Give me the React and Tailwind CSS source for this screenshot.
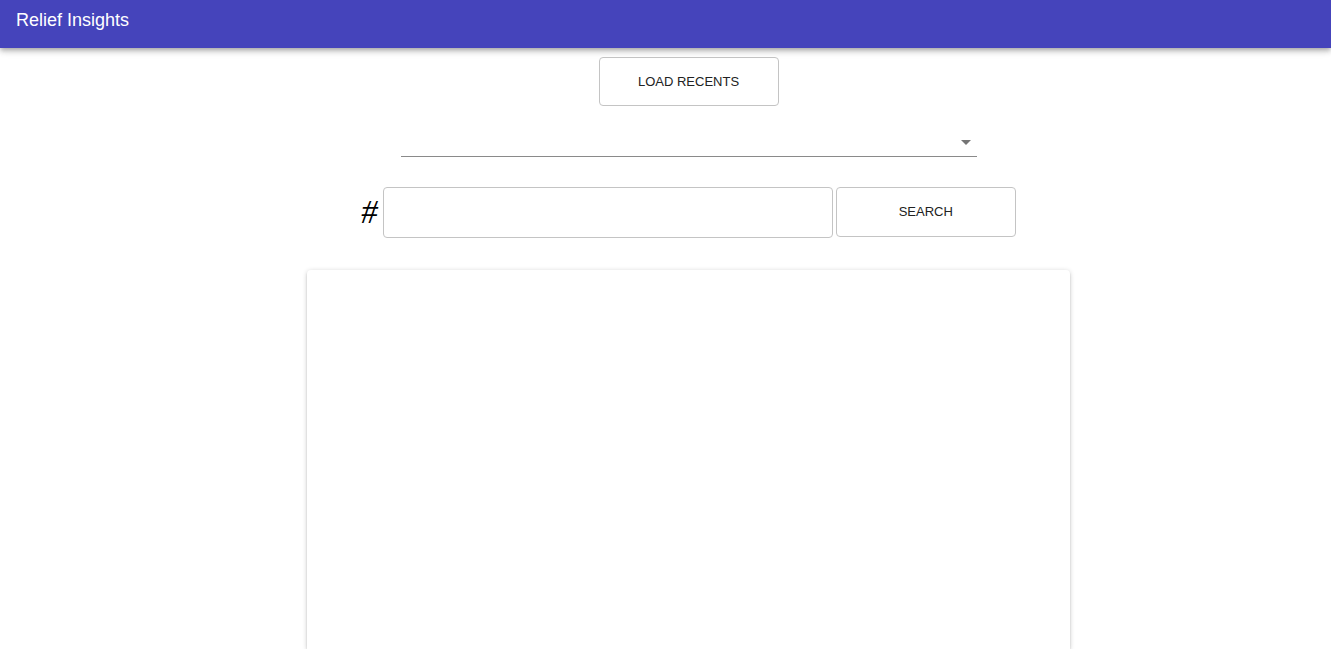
import React, { useState } from 'react';

const SANS = "font-['Liberation_Sans',Arial,sans-serif]";

const App = () => {
  const [tag, setTag] = useState('');
  const [category, setCategory] = useState('');

  return (
    <div className={`min-h-screen bg-white ${SANS}`}>
      {/* ── App bar ───────────────────────────────────────────── */}
      <header className="h-12 bg-[#4544bb] px-4 pt-[8px] shadow-[0_2px_4px_-1px_rgba(0,0,0,0.2),0_4px_5px_0_rgba(0,0,0,0.14),0_1px_10px_0_rgba(0,0,0,0.12)] relative z-10">
        <h1 className="text-[18px] leading-[24px] text-white">Relief Insights</h1>
      </header>

      <main className="flex flex-col items-center pl-[46px]">
        <button className="mt-[9px] w-[180px] h-[49px] rounded border border-[#c4c4c4] bg-white text-[13px] text-[#222] uppercase">
          Load Recents
        </button>

        {/* ── Category select ─────────────────────────────────── */}
        <div className="relative mt-[19px] w-[576px] h-[32px] border-b border-[#8a8a8a]">
          <select
            value={category}
            onChange={(e) => setCategory(e.target.value)}
            className="w-full h-full appearance-none bg-transparent outline-none text-[16px]"
          >
            <option value="" />
          </select>
          <span className="pointer-events-none absolute right-[6px] top-[15px] w-0 h-0 border-l-[5px] border-r-[5px] border-t-[5px] border-l-transparent border-r-transparent border-t-[#757575]" />
        </div>

        {/* ── Hashtag search ──────────────────────────────────── */}
        <div className="mt-[30px] flex items-start">
          <span className="font-['Liberation_Serif','Times_New_Roman',serif] italic text-[33px] leading-[51px] text-black mr-[5px]">#</span>
          <input
            value={tag}
            onChange={(e) => setTag(e.target.value)}
            className="w-[450px] h-[51px] rounded border border-[#c4c4c4] px-3 outline-none text-[16px]"
          />
          <button className="ml-[3px] w-[180px] h-[50px] rounded border border-[#c4c4c4] bg-white text-[13px] text-[#222] uppercase">
            Search
          </button>
        </div>

        {/* ── Results card ────────────────────────────────────── */}
        <div className="mt-[32px] w-[763px] h-[379px] bg-white rounded-t-sm shadow-[0_1px_5px_0_rgba(0,0,0,0.2),0_2px_2px_0_rgba(0,0,0,0.14),0_3px_1px_-2px_rgba(0,0,0,0.12)]" />
      </main>
    </div>
  );
};

export default App;
